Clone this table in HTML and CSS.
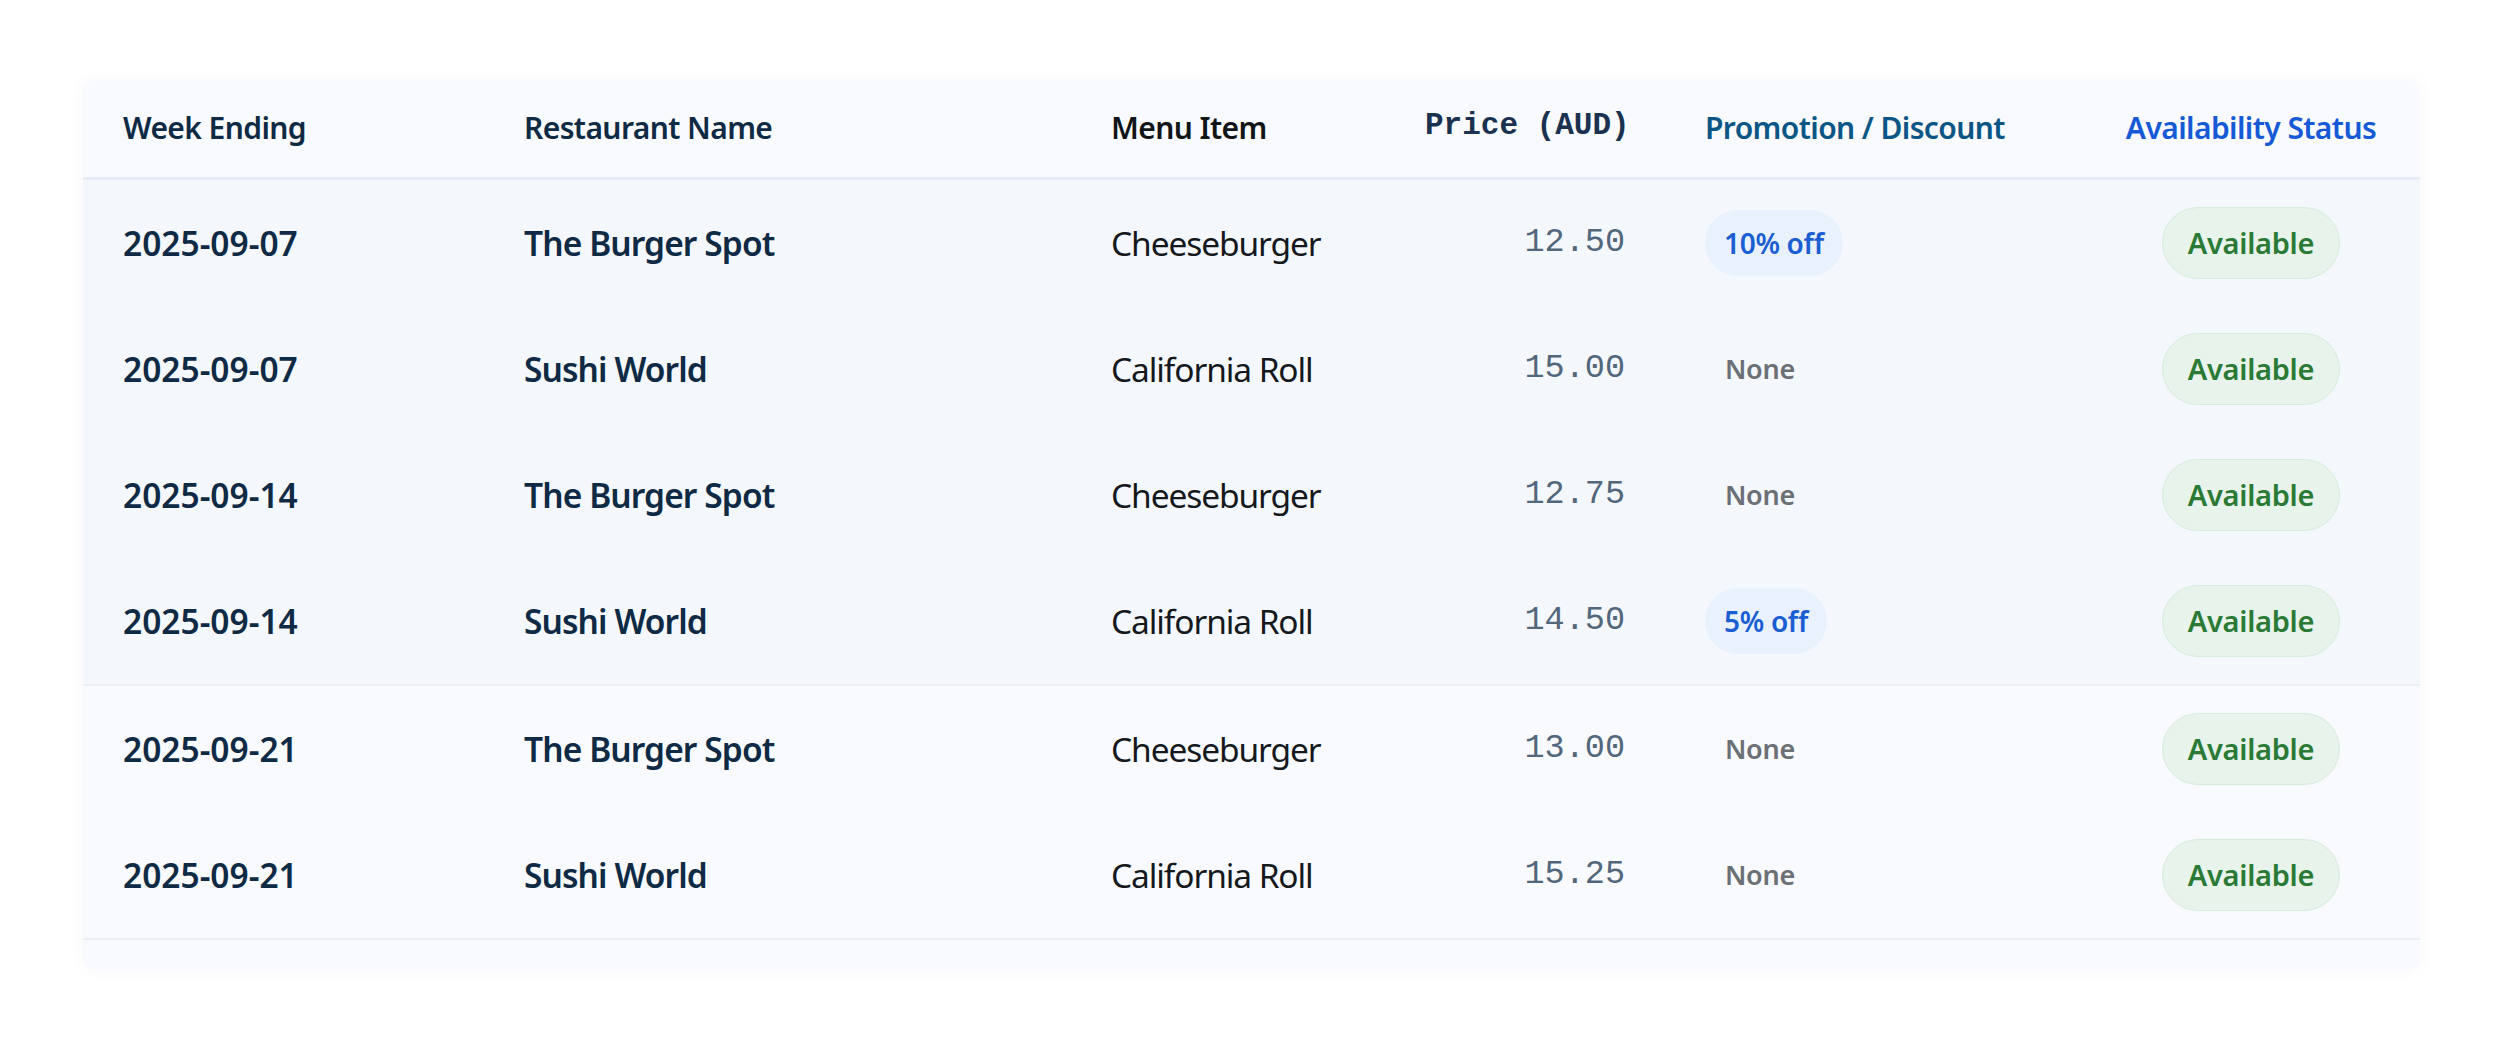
FILE: index.html
```html
<!DOCTYPE html>
<html lang="en">
<head>
<meta charset="utf-8">
<title>Weekly Menu Prices</title>
<link rel="stylesheet" href="styles.css">
</head>
<body>
<div class="card">
  <table class="prices">
    <colgroup>
      <col class="c-week">
      <col class="c-rest">
      <col class="c-item">
      <col class="c-price">
      <col class="c-promo">
      <col class="c-status">
    </colgroup>
    <thead>
      <tr>
        <th class="h-week">Week Ending</th>
        <th class="h-rest">Restaurant Name</th>
        <th class="h-item">Menu Item</th>
        <th class="h-price">Price (AUD)</th>
        <th class="h-promo">Promotion / Discount</th>
        <th class="h-status">Availability Status</th>
      </tr>
    </thead>
    <tbody class="group-a">
      <tr>
        <td class="week">2025-09-07</td>
        <td class="rest">The Burger Spot</td>
        <td class="item">Cheeseburger</td>
        <td class="price">12.50</td>
        <td class="promo"><span class="pill pill-deal">10% off</span></td>
        <td class="status"><span class="pill pill-ok">Available</span></td>
      </tr>
      <tr>
        <td class="week">2025-09-07</td>
        <td class="rest">Sushi World</td>
        <td class="item">California Roll</td>
        <td class="price">15.00</td>
        <td class="promo"><span class="pill pill-none">None</span></td>
        <td class="status"><span class="pill pill-ok">Available</span></td>
      </tr>
      <tr>
        <td class="week">2025-09-14</td>
        <td class="rest">The Burger Spot</td>
        <td class="item">Cheeseburger</td>
        <td class="price">12.75</td>
        <td class="promo"><span class="pill pill-none">None</span></td>
        <td class="status"><span class="pill pill-ok">Available</span></td>
      </tr>
      <tr class="last">
        <td class="week">2025-09-14</td>
        <td class="rest">Sushi World</td>
        <td class="item">California Roll</td>
        <td class="price">14.50</td>
        <td class="promo"><span class="pill pill-deal">5% off</span></td>
        <td class="status"><span class="pill pill-ok">Available</span></td>
      </tr>
    </tbody>
    <tbody class="group-b">
      <tr>
        <td class="week">2025-09-21</td>
        <td class="rest">The Burger Spot</td>
        <td class="item">Cheeseburger</td>
        <td class="price">13.00</td>
        <td class="promo"><span class="pill pill-none">None</span></td>
        <td class="status"><span class="pill pill-ok">Available</span></td>
      </tr>
      <tr class="last">
        <td class="week">2025-09-21</td>
        <td class="rest">Sushi World</td>
        <td class="item">California Roll</td>
        <td class="price">15.25</td>
        <td class="promo"><span class="pill pill-none">None</span></td>
        <td class="status"><span class="pill pill-ok">Available</span></td>
      </tr>
    </tbody>
  </table>
</div>
</body>
</html>
```

FILE: styles.css
```css
html, body {
  margin: 0;
  padding: 0;
  background: #ffffff;
}

body {
  padding: 80px 86px 77px 83px;
  font-family: "Noto Sans", "Open Sans", sans-serif;
  color: #0f2a44;
}

.card {
  background: #f8fafd;
  border-radius: 10px;
  box-shadow: 0 0 18px rgba(40, 70, 130, 0.035);
  padding-bottom: 30px;
}

.prices {
  width: 100%;
  border-collapse: collapse;
  table-layout: fixed;
}

.c-week { width: 401px; }
.c-rest { width: 587px; }
.c-item { width: 314px; }
.c-price { width: 280px; }
.c-promo { width: 417px; }
.c-status { width: 338px; }

.prices th {
  box-sizing: border-box;
  height: 98px;
  padding: 0 40px;
  text-align: left;
  font-size: 30px;
  font-weight: 600;
  line-height: 40px;
  letter-spacing: -0.6px;
  border-bottom: 3px solid #e6ebf8;
  white-space: nowrap;
  color: #0f2a44;
}

.prices th.h-item { color: #111418; }

.prices th.h-price {
  padding-bottom: 4px;
  text-align: right;
  font-family: "Liberation Mono", "Courier New", monospace;
  font-weight: 700;
  font-size: 31px;
  letter-spacing: 0;
  color: #1b3150;
}

.prices th.h-promo { color: #0c5686; }

.prices th.h-status {
  text-align: center;
  color: #1659d6;
}

.prices td {
  height: 126px;
  padding: 0 40px;
  font-size: 33.5px;
  line-height: 44px;
  white-space: nowrap;
  vertical-align: middle;
}

.group-a tr { background: #f4f8fc; }
.group-b tr { background: #f8fafd; }

.prices tr.last td {
  border-bottom: 2px solid #eceff4;
}

.week {
  font-weight: 600;
  color: #0f2a44;
}

.rest {
  font-weight: 600;
  color: #0f2a44;
  letter-spacing: -0.9px;
}

.item {
  font-weight: 400;
  color: #15191e;
  letter-spacing: -1.1px;
}

.prices td.price {
  height: 124px;
  padding-bottom: 2px;
  text-align: right;
  font-family: "Liberation Mono", "Courier New", monospace;
  font-weight: 400;
  color: #52677b;
}

.promo {
  text-align: left;
}

.status {
  text-align: center;
}

.pill {
  display: inline-block;
  font-size: 28px;
  font-weight: 600;
  line-height: 40px;
  border-radius: 40px;
  letter-spacing: -0.3px;
}

.pill-deal {
  padding: 13px 19px;
  background: #e9f1fd;
  color: #1a5ed2;
}

.pill-none {
  padding: 13px 20px;
  color: #6b6f76;
  font-size: 27px;
}

.pill-ok {
  padding: 15px 25px;
  background: #e7f3eb;
  border: 1px solid #d8eadd;
  color: #2a7a35;
  font-size: 29px;
}
```
